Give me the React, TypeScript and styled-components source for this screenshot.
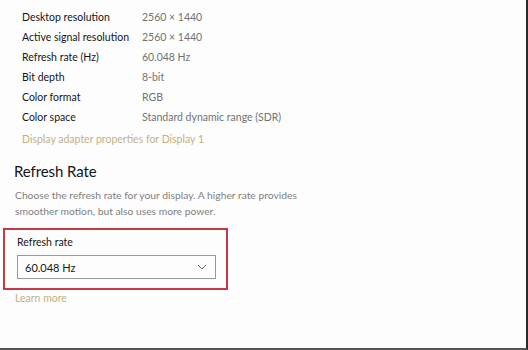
import styled, { createGlobalStyle } from "styled-components";

const GlobalStyle = createGlobalStyle`
  html, body {
    margin: 0;
    padding: 0;
    background: #fdfdfd;
  }
  * {
    box-sizing: border-box;
  }
`;

const Screen = styled.div`
  width: 528px;
  height: 350px;
  background: #fdfdfd;
  font-family: "Lato", "Liberation Sans", sans-serif;
  border-right: 2px solid #2a2a2a;
  border-bottom: 2px solid #555;
  overflow: hidden;
  padding-top: 7px;
`;

const InfoTable = styled.div`
  display: grid;
  grid-template-columns: 120px 1fr;
  grid-auto-rows: 20px;
  padding-left: 22px;
  align-items: center;
`;

const InfoLabel = styled.span`
  font-size: 10.5px;
  color: #151515;
`;

const InfoValue = styled.span`
  font-size: 10.5px;
  color: #727272;
`;

const Link = styled.a<{ $indent?: number }>`
  display: block;
  font-size: 10.5px;
  color: #c4b083;
  text-decoration: none;
  padding-left: ${(p) => p.$indent ?? 0}px;
`;

const AdapterLink = styled(Link)`
  height: 20px;
  line-height: 20px;
  margin-top: 2px;
`;

const Section = styled.section`
  padding-left: 15px;
  margin-top: 10px;
`;

const Heading = styled.h2`
  margin: 0 0 0 -1px;
  font-size: 15px;
  letter-spacing: -0.1px;
  font-weight: 400;
  color: #151515;
  line-height: 24px;
`;

const Description = styled.p`
  margin: 4px 0 0;
  width: 300px;
  font-size: 10.3px;
  line-height: 16px;
  color: #808080;
`;

const Highlight = styled.div`
  width: 225px;
  margin: 9px 0 0 -12px;
  padding: 4px 12px 9px;
  border: 2px solid #c63a48;
`;

const FieldLabel = styled.div`
  font-size: 10.5px;
  color: #151515;
  line-height: 16px;
`;

const Select = styled.div`
  margin-top: 5px;
  width: 199px;
  height: 24px;
  border: 1.5px solid #9a9a9a;
  display: flex;
  align-items: center;
  justify-content: space-between;
  padding: 0 8px 0 7px;
  font-size: 11px;
  color: #151515;
`;

const Chevron = styled.svg`
  width: 10px;
  height: 6px;
`;

const LearnMore = styled(Link)`
  margin-top: 0px;
  line-height: 16px;
`;

const rows: [string, string][] = [
  ["Desktop resolution", "2560 × 1440"],
  ["Active signal resolution", "2560 × 1440"],
  ["Refresh rate (Hz)", "60.048 Hz"],
  ["Bit depth", "8-bit"],
  ["Color format", "RGB"],
  ["Color space", "Standard dynamic range (SDR)"],
];

const App = () => {
  return (
    <>
      <GlobalStyle />
      <Screen>
        <InfoTable>
          {rows.map(([label, value]) => (
            <>
              <InfoLabel key={label}>{label}</InfoLabel>
              <InfoValue key={label + "v"}>{value}</InfoValue>
            </>
          ))}
        </InfoTable>
        <AdapterLink $indent={22}>Display adapter properties for Display 1</AdapterLink>

        <Section>
          <Heading>Refresh Rate</Heading>
          <Description>
            Choose the refresh rate for your display. A higher rate provides
            smoother motion, but also uses more power.
          </Description>
          <Highlight>
            <FieldLabel>Refresh rate</FieldLabel>
            <Select>
              60.048 Hz
              <Chevron viewBox="0 0 10 6">
                <path d="M1 1l4 4 4-4" fill="none" stroke="#666" strokeWidth="1" />
              </Chevron>
            </Select>
          </Highlight>
          <LearnMore>Learn more</LearnMore>
        </Section>
      </Screen>
    </>
  );
};

export default App;
